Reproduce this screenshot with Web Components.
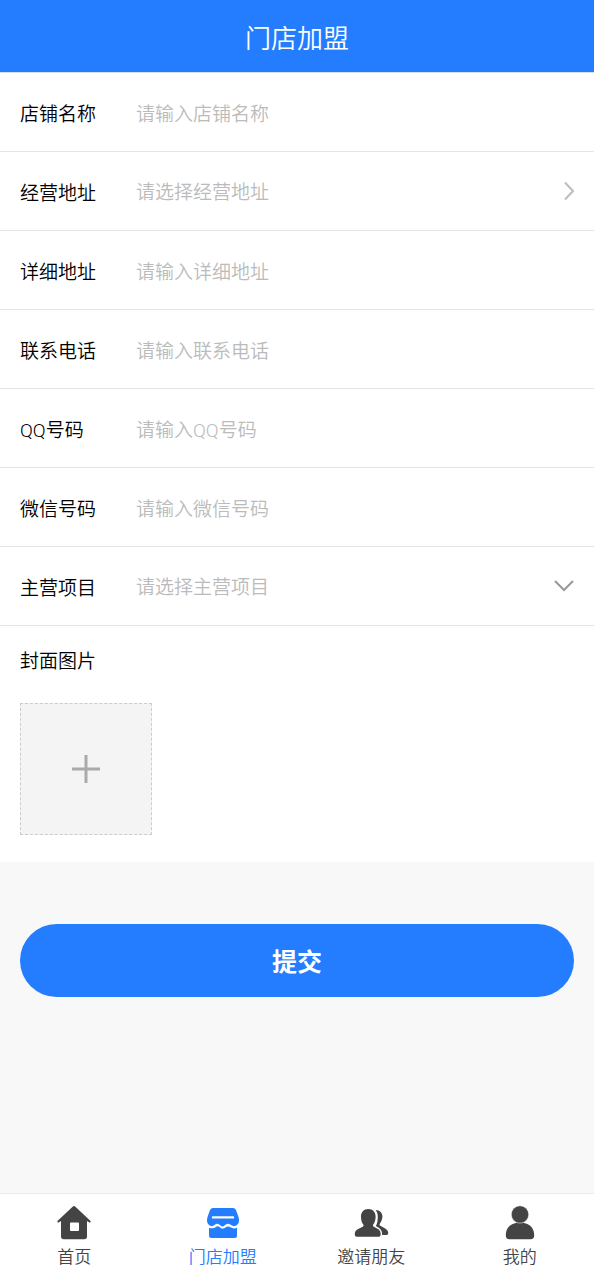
<!DOCTYPE html>
<html lang="zh-CN">
<head>
<meta charset="utf-8">
<meta name="viewport" content="width=device-width, initial-scale=1">
<title>门店加盟</title>
<style>
  body { margin: 0; background: #f8f8f8; font-family: Roboto, "Noto Sans CJK SC", sans-serif; font-weight: 350; color: #000; }
</style>
</head>
<body>
<join-page></join-page>
<script>
class BaseElement extends HTMLElement {
  constructor() {
    super();
    this.attachShadow({ mode: 'open' });
  }
  connectedCallback() {
    this.shadowRoot.innerHTML = `<style>*{box-sizing:border-box}</style>` + this.render();
  }
}

/* Blue title bar */
customElements.define('page-header', class extends BaseElement {
  render() {
    return `<style>
      :host { display: block; background: #247dfe; border-bottom: 1px solid #d5dfea; }
      h1 { margin: 0; padding: 6px 0 0; font-size: 26px; line-height: 66px; font-weight: inherit; text-align: center; color: #fff; }
    </style><h1><slot></slot></h1>`;
  }
});

/* One form row. type: text | link | select */
customElements.define('form-field', class extends BaseElement {
  render() {
    const hint = this.getAttribute('hint');
    const type = this.getAttribute('type') || 'text';
    const controls = {
      text: `<input id="control" type="text" placeholder="${hint}">`,
      link: `<button id="control" type="button">${hint}</button>
        <svg width="10" height="20" viewBox="0 0 10 20" stroke="#bdbdbd"><path d="M1 1.500 9 10 1 18.500"/></svg>`,
      select: `<select id="control"><option>${hint}</option></select>
        <svg width="20" height="12" viewBox="0 0 20 12" stroke="#999"><path d="M1 1 10 10 19 1"/></svg>`
    };
    return `<style>
      :host { display: flex; align-items: center; height: 79px; padding: 0 20px; background: #fff; border-bottom: 1px solid #e4e4e4; font-size: 19px; }
      label { flex: 0 0 116px; padding-top: 5px; line-height: 28px; }
      input, button, select {
        flex: 1; min-width: 0; height: 48px; margin: 0; padding: 4px 0 0; border: 0; outline: 0;
        background: none; appearance: none; font: inherit; line-height: 28px; color: #bbb; text-align: left;
      }
      input { color: #000; }
      input::placeholder { color: #bbb; opacity: 1; }
      svg { flex: none; fill: none; stroke-width: 2; pointer-events: none; }
    </style><label for="control"><slot></slot></label>${controls[type]}`;
  }
});

/* Cover picture picker */
customElements.define('image-picker', class extends BaseElement {
  render() {
    return `<style>
      :host { display: block; padding: 21px 20px 27px; background: #fff; font-size: 19px; line-height: 30px; }
      button { display: grid; place-items: center; width: 132px; height: 132px; margin: 26px 0 0; padding: 0; border: 1px dashed #ccc; background: #f4f4f4; }
      svg { stroke: #aaa; stroke-width: 3; }
    </style>
    <div id="title"><slot></slot></div>
    <button type="button" aria-labelledby="title">
      <svg width="30" height="30" viewBox="0 0 30 30"><path d="M15 1V29M1 15H29"/></svg>
    </button>`;
  }
});

customElements.define('submit-button', class extends BaseElement {
  render() {
    return `<style>
      :host { display: block; padding: 0 20px; }
      button { display: block; width: 100%; height: 73px; padding: 0 0 2px; border: 0; border-radius: 37px; background: #247dfe; color: #fff; font: inherit; font-size: 25px; font-weight: 700; }
    </style><button type="button"><slot></slot></button>`;
  }
});

const ICONS = {
  home: `<path fill-rule="evenodd" d="M16.600 1.700Q18 .4 19.400 1.700L34.300 15.800Q35.300 17.200 33.800 17.800L31 15.900V31.500Q31 34.300 28.200 34.300H7.800Q5 34.300 5 31.500V15.900L2.200 17.800Q.7 17.200 1.700 15.800ZM15 17.500Q14 17.500 14 18.500V25Q14 26 15 26H22Q23 26 23 25V18.500Q23 17.500 22 17.500Z"/>`,
  shop: `<path fill-rule="evenodd" d="M8 3H28Q30 3 31 5L33.500 12Q35 17 32.500 19.500 29.500 22.500 26 20 22.500 17.500 19.500 20.500 17.500 22.500 15.500 20.500 12.500 17.500 9.500 20 6.500 22.500 3.500 19.500 1 17 2.500 12L5 5Q6 3 8 3ZM8 11.200Q6.800 11.200 6.800 12.400T8 13.600H28Q29.200 13.600 29.200 12.400T28 11.200Z"/><path d="M4 22.800Q8 24.200 11 22 13 20.500 15 22.500 17.500 24.800 20.500 22.500 23 20.500 25.500 22.300 28.500 24.200 32 22.800V30.500Q32 33 29.500 33H6.500Q4 33 4 30.500Z"/>`,
  friends: `<path d="M15.300 4C20 4 22.800 7.500 22.600 12 22.500 15.500 21.500 18 20.200 19.500 19.600 20.700 20 21.300 21.300 22 25.300 24 27.700 25 27.700 29 27.700 31.300 27 31.800 24.500 31.800H5C2.500 31.800 1.800 31.300 1.800 29 1.800 25 5.200 24 9.200 22 10.500 21.300 10.900 20.700 10.300 19.500 9 18 8.100 15.500 8 12 7.800 7.500 10.700 4 15.300 4Z"/><path d="M22.500 5C27 5 29.600 8 29.400 12 29.200 15.500 27.500 17.500 26.700 19 26.200 20 26.700 20.500 27.700 21 31.500 23 35.200 24.500 35.200 28 35.200 29.500 34.500 30 33 30H29.200C29.200 25.500 27.500 23.500 22.800 21 24.200 19 24.800 15.500 24.800 12 24.800 9 24.200 6.800 22.500 5Z"/>`,
  me: `<path d="M13 18.200Q18 16.800 23 18.200C29.500 19.500 32.200 25 32.200 30 32.200 33 31 34.300 28.500 34.300H7.500C5 34.300 3.800 33 3.800 30 3.800 25 6.500 19.500 13 18.200Z"/><circle cx="18" cy="9.500" r="8.700" stroke="#fff" stroke-width=".5"/>`
};

customElements.define('tab-item', class extends BaseElement {
  render() {
    return `<style>
      :host { flex: 1; color: #444; }
      :host([active]) { color: #247dfe; }
      a { display: flex; flex-direction: column; align-items: center; color: inherit; text-decoration: none; font-size: 17px; line-height: 26px; }
      svg { display: block; fill: currentColor; margin-bottom: 3px; }
    </style><a href="#${this.getAttribute('icon')}">
      <svg width="36" height="36" viewBox="0 0 36 36" aria-hidden="true">${ICONS[this.getAttribute('icon')]}</svg>
      <span><slot></slot></span></a>`;
  }
});

customElements.define('tab-bar', class extends BaseElement {
  render() {
    return `<style>
      :host { display: block; background: #fff; border-top: 1px solid #ebebeb; }
      nav { display: flex; padding: 11px 0 10px; }
    </style><nav><slot></slot></nav>`;
  }
});

customElements.define('join-page', class extends BaseElement {
  render() {
    return `<style>
      :host { display: flex; flex-direction: column; min-height: 100vh; }
      main { flex: 1; padding-bottom: 62px; }
      submit-button { margin-top: 62px; }
    </style>
    <page-header>门店加盟</page-header>
    <main>
      <form-field hint="请输入店铺名称">店铺名称</form-field>
      <form-field type="link" hint="请选择经营地址">经营地址</form-field>
      <form-field hint="请输入详细地址">详细地址</form-field>
      <form-field hint="请输入联系电话">联系电话</form-field>
      <form-field hint="请输入QQ号码">QQ号码</form-field>
      <form-field hint="请输入微信号码">微信号码</form-field>
      <form-field type="select" hint="请选择主营项目">主营项目</form-field>
      <image-picker>封面图片</image-picker>
      <submit-button>提交</submit-button>
    </main>
    <tab-bar>
      <tab-item icon="home">首页</tab-item>
      <tab-item icon="shop" active>门店加盟</tab-item>
      <tab-item icon="friends">邀请朋友</tab-item>
      <tab-item icon="me">我的</tab-item>
    </tab-bar>`;
  }
});
</script>
</body>
</html>
